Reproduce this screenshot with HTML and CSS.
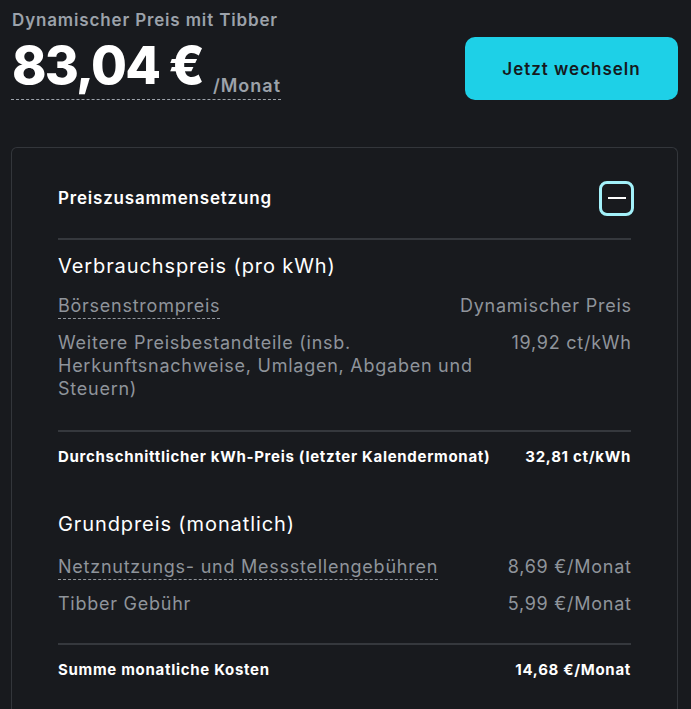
FILE: index.html
```html
<!DOCTYPE html>
<html lang="de">
<head>
<meta charset="utf-8">
<link rel="stylesheet" href="styles.css">
</head>
<body>
<div class="page">
  <header class="top">
    <div class="price-block">
      <div class="label">Dynamischer Preis mit Tibber</div>
      <div class="price"><span class="amount">83,04 €</span><span class="per">/Monat</span></div>
    </div>
    <button class="cta">Jetzt wechseln</button>
  </header>
  <section class="card">
    <div class="card-head">
      <h2>Preiszusammensetzung</h2>
      <button class="toggle" aria-label="Zuklappen"><span class="minus"></span></button>
    </div>
    <div class="group">
      <h3>Verbrauchspreis (pro kWh)</h3>
      <div class="row"><span class="name dotted">Börsenstrompreis</span><span class="val">Dynamischer Preis</span></div>
      <div class="row"><span class="name">Weitere Preisbestandteile (insb. Herkunftsnachweise, Umlagen, Abgaben und Steuern)</span><span class="val">19,92 ct/kWh</span></div>
    </div>
    <div class="total"><span>Durchschnittlicher kWh-Preis (letzter Kalendermonat)</span><span>32,81 ct/kWh</span></div>
    <div class="group group-second">
      <h3>Grundpreis (monatlich)</h3>
      <div class="row"><span class="name dotted">Netznutzungs- und Messstellengebühren</span><span class="val">8,69 €/Monat</span></div>
      <div class="row"><span class="name">Tibber Gebühr</span><span class="val">5,99 €/Monat</span></div>
    </div>
    <div class="total"><span>Summe monatliche Kosten</span><span>14,68 €/Monat</span></div>
  </section>
</div>
</body>
</html>
```
FILE: styles.css
```css
* { box-sizing: border-box; }
html, body { margin: 0; padding: 0; background: #181a1e; }
body { font-family: "Inter", "Noto Sans", sans-serif; color: #fff; }
.page { padding: 9px 13px 0 11px; }
.top { display: flex; justify-content: space-between; align-items: flex-start; }
.price-block { display: flex; flex-direction: column; }
.label { font-size: 17px; font-weight: 600; color: #9ca2aa; line-height: 22px; padding-left: 1px; letter-spacing: 0.85px; }
.price { display: flex; align-items: flex-end; gap: 10px; border-bottom: 1px dashed #9ca2aa; padding-bottom: 7px; margin-top: 9px; align-self: flex-start; }
.amount { font-size: 52px; font-weight: 800; line-height: 52px; letter-spacing: -1.8px; padding-left: 1px; }
.per { font-size: 18px; font-weight: 600; color: #9ca2aa; line-height: 13px; letter-spacing: 1px; }
.cta { margin-top: 28px; width: 213px; height: 63px; border: 0; border-radius: 10px; background: #1ed0e7; color: #16191d; font-family: inherit; font-size: 17px; font-weight: 600; letter-spacing: 1px; }
.card { margin-top: 47px; border: 1px solid #33363b; border-radius: 6px 6px 0 0; border-bottom: 0; padding: 0 46px 20px 46px; }
.card-head { display: flex; justify-content: space-between; align-items: center; height: 92px; padding-top: 10px; border-bottom: 2px solid #35383d; }
.card-head h2 { margin: 0; font-size: 17px; font-weight: 600; letter-spacing: 0.8px; }
.toggle { width: 35px; height: 35px; border: 3px solid #a3f1fa; border-radius: 8px; background: #181a1e; display: flex; align-items: center; justify-content: center; padding: 0; margin-right: -3px; }
.minus { width: 18px; height: 2px; background: #fff; }
.group { padding-top: 12px; padding-bottom: 16px; border-bottom: 2px solid #35383d; }
.group h3 { margin: 0 0 14px; font-size: 20px; font-weight: 400; line-height: 28px; letter-spacing: 0.9px; }
.group-second h3 { margin-bottom: 17px; }
.group-second { padding-bottom: 14px; }
.row { display: flex; justify-content: space-between; gap: 16px; font-size: 18px; color: #8f949b; line-height: 23px; margin-bottom: 14px; letter-spacing: 0.75px; }
.row .name { max-width: 425px; }
.dotted { text-decoration: underline dashed; text-underline-offset: 6px; text-decoration-thickness: 1px; }
.val { white-space: nowrap; text-align: right; margin-right: -0.75px; flex-shrink: 0; }
.total { display: flex; justify-content: space-between; font-size: 15px; font-weight: 700; line-height: 20px; padding: 15px 0 31px; letter-spacing: 0.7px; }
```
